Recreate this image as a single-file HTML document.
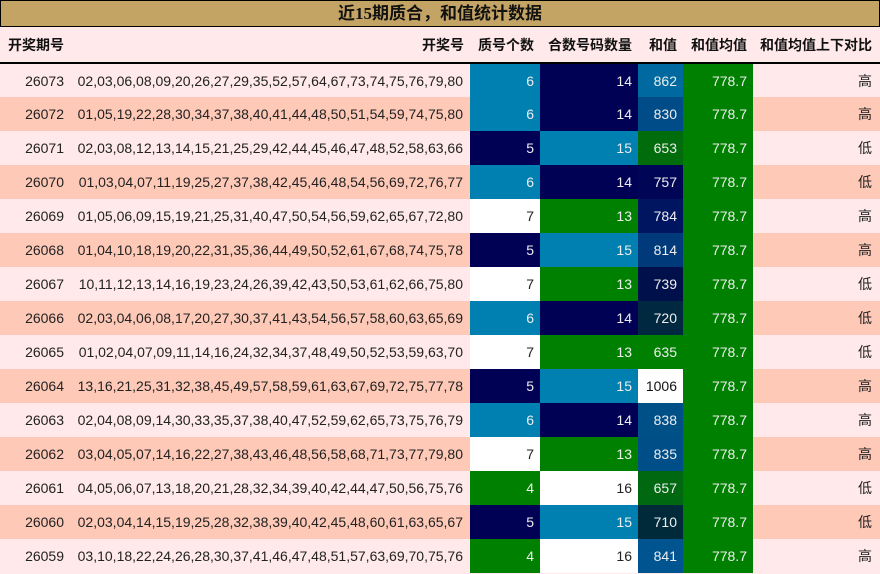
<!DOCTYPE html>
<html><head><meta charset="utf-8"><style>
*{margin:0;padding:0;box-sizing:border-box}
body{width:880px;height:574px;background:#ffe9ea;font-family:"Liberation Sans","Noto Sans CJK SC",sans-serif;font-size:14px;overflow:hidden}
.title{height:27px;background:#c4a464;border:1px solid #000;text-align:center;font-weight:bold;font-size:17px;line-height:25px;color:#111;font-family:"Liberation Serif","Noto Sans CJK SC",serif}
table{border-collapse:collapse;width:880px;table-layout:fixed}
th{height:36px;font-weight:bold;font-size:14px;text-align:right;padding-right:6px;border-bottom:2px solid #000;color:#111}
th.l{text-align:left;padding-left:8px}
td{height:34px;text-align:right;padding-right:6px;color:#222;white-space:nowrap}
td:nth-child(2){padding-right:7px}
td:last-child,th:last-child{padding-right:8px}
tr.o td{background:#ffe9ea}
tr.e td{background:#ffc9b8}
td.c{color:#eee}
</style></head><body>
<div class="title">近15期质合，和值统计数据</div>
<table>
<colgroup><col style="width:70px"><col style="width:400px"><col style="width:70px"><col style="width:98px"><col style="width:45px"><col style="width:70px"><col style="width:127px"></colgroup>
<tr><th class="l">开奖期号</th><th>开奖号</th><th>质号个数</th><th>合数号码数量</th><th>和值</th><th>和值均值</th><th>和值均值上下对比</th></tr>
<tr class="o"><td>26073</td><td>02,03,06,08,09,20,26,27,29,35,52,57,64,67,73,74,75,76,79,80</td><td class="c" style="background:#0080b0">6</td><td class="c" style="background:#000055">14</td><td class="c" style="background:#006aa0">862</td><td class="c" style="background:#008000">778.7</td><td>高</td></tr>
<tr class="e"><td>26072</td><td>01,05,19,22,28,30,34,37,38,40,41,44,48,50,51,54,59,74,75,80</td><td class="c" style="background:#0080b0">6</td><td class="c" style="background:#000055">14</td><td class="c" style="background:#004c88">830</td><td class="c" style="background:#008000">778.7</td><td>高</td></tr>
<tr class="o"><td>26071</td><td>02,03,08,12,13,14,15,21,25,29,42,44,45,46,47,48,52,58,63,66</td><td class="c" style="background:#000055">5</td><td class="c" style="background:#0080b0">15</td><td class="c" style="background:#006c0c">653</td><td class="c" style="background:#008000">778.7</td><td>低</td></tr>
<tr class="e"><td>26070</td><td>01,03,04,07,11,19,25,27,37,38,42,45,46,48,54,56,69,72,76,77</td><td class="c" style="background:#0080b0">6</td><td class="c" style="background:#000055">14</td><td class="c" style="background:#000555">757</td><td class="c" style="background:#008000">778.7</td><td>低</td></tr>
<tr class="o"><td>26069</td><td>01,05,06,09,15,19,21,25,31,40,47,50,54,56,59,62,65,67,72,80</td><td style="background:#fff">7</td><td class="c" style="background:#008000">13</td><td class="c" style="background:#001560">784</td><td class="c" style="background:#008000">778.7</td><td>高</td></tr>
<tr class="e"><td>26068</td><td>01,04,10,18,19,20,22,31,35,36,44,49,50,52,61,67,68,74,75,78</td><td class="c" style="background:#000055">5</td><td class="c" style="background:#0080b0">15</td><td class="c" style="background:#003a7a">814</td><td class="c" style="background:#008000">778.7</td><td>高</td></tr>
<tr class="o"><td>26067</td><td>10,11,12,13,14,16,19,23,24,26,39,42,43,50,53,61,62,66,75,80</td><td style="background:#fff">7</td><td class="c" style="background:#008000">13</td><td class="c" style="background:#00104a">739</td><td class="c" style="background:#008000">778.7</td><td>低</td></tr>
<tr class="e"><td>26066</td><td>02,03,04,06,08,17,20,27,30,37,41,43,54,56,57,58,60,63,65,69</td><td class="c" style="background:#0080b0">6</td><td class="c" style="background:#000055">14</td><td class="c" style="background:#002840">720</td><td class="c" style="background:#008000">778.7</td><td>低</td></tr>
<tr class="o"><td>26065</td><td>01,02,04,07,09,11,14,16,24,32,34,37,48,49,50,52,53,59,63,70</td><td style="background:#fff">7</td><td class="c" style="background:#008000">13</td><td class="c" style="background:#008000">635</td><td class="c" style="background:#008000">778.7</td><td>低</td></tr>
<tr class="e"><td>26064</td><td>13,16,21,25,31,32,38,45,49,57,58,59,61,63,67,69,72,75,77,78</td><td class="c" style="background:#000055">5</td><td class="c" style="background:#0080b0">15</td><td style="background:#fff;color:#111">1006</td><td class="c" style="background:#008000">778.7</td><td>高</td></tr>
<tr class="o"><td>26063</td><td>02,04,08,09,14,30,33,35,37,38,40,47,52,59,62,65,73,75,76,79</td><td class="c" style="background:#0080b0">6</td><td class="c" style="background:#000055">14</td><td class="c" style="background:#005088">838</td><td class="c" style="background:#008000">778.7</td><td>高</td></tr>
<tr class="e"><td>26062</td><td>03,04,05,07,14,16,22,27,38,43,46,48,56,58,68,71,73,77,79,80</td><td style="background:#fff">7</td><td class="c" style="background:#008000">13</td><td class="c" style="background:#004e88">835</td><td class="c" style="background:#008000">778.7</td><td>高</td></tr>
<tr class="o"><td>26061</td><td>04,05,06,07,13,18,20,21,28,32,34,39,40,42,44,47,50,56,75,76</td><td class="c" style="background:#008000">4</td><td style="background:#fff">16</td><td class="c" style="background:#006810">657</td><td class="c" style="background:#008000">778.7</td><td>低</td></tr>
<tr class="e"><td>26060</td><td>02,03,04,14,15,19,25,28,32,38,39,40,42,45,48,60,61,63,65,67</td><td class="c" style="background:#000055">5</td><td class="c" style="background:#0080b0">15</td><td class="c" style="background:#002a3a">710</td><td class="c" style="background:#008000">778.7</td><td>低</td></tr>
<tr class="o"><td>26059</td><td>03,10,18,22,24,26,28,30,37,41,46,47,48,51,57,63,69,70,75,76</td><td class="c" style="background:#008000">4</td><td style="background:#fff">16</td><td class="c" style="background:#005490">841</td><td class="c" style="background:#008000">778.7</td><td>高</td></tr>
</table>
</body></html>
